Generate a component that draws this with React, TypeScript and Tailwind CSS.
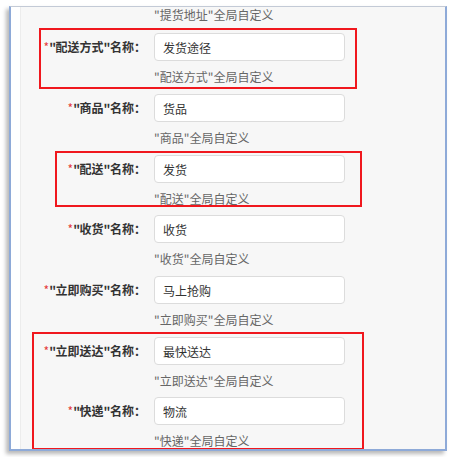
import React from "react";

interface Field {
  key: string;
  value: string;
  gap: string;
}

const fields: Field[] = [
  { key: "配送方式", value: "发货途径", gap: "pb-[9px]" },
  { key: "商品", value: "货品", gap: "pb-[9px]" },
  { key: "配送", value: "发货", gap: "pb-[8px]" },
  { key: "收货", value: "收货", gap: "pb-[9px]" },
  { key: "立即购买", value: "马上抢购", gap: "pb-[9px]" },
  { key: "立即送达", value: "最快送达", gap: "pb-[8px]" },
  { key: "快递", value: "物流", gap: "" },
];

const font = {
  fontFamily: '"Noto Sans CJK SC", "Noto Sans", sans-serif',
};

function Row({ field }: { field: Field }) {
  return (
    <div className={field.gap}>
      <div className="flex items-center">
        <label className="w-[125px] text-right text-[12px] font-bold text-[#333] whitespace-nowrap">
          <span className="text-[#e4393c] font-normal">*</span>
          <span className="tracking-[-0.5px]">"</span>
          {field.key}
          <span className="tracking-[-0.5px]">"</span>名称：
        </label>
        <input
          readOnly
          defaultValue={field.value}
          className="ml-[8px] w-[191px] h-[28px] rounded-[4px] border border-[#dcdcdc] bg-white pl-[8px] text-[12px] text-[#333] outline-none"
          style={font}
        />
      </div>
      <div className="pt-[8px] pl-[133px] h-[24px] leading-[16px] text-[12px] text-[#666] whitespace-nowrap">
        "{field.key}"全局自定义
      </div>
    </div>
  );
}

function Marked({
  children,
  box,
}: {
  children: React.ReactNode;
  box: string;
}) {
  return (
    <div className="relative">
      {children}
      <span className={`pointer-events-none absolute border-2 border-[#f0181e] ${box}`} />
    </div>
  );
}

export default function App() {
  const [f1, f2, f3, f4, f5, f6, f7] = fields;
  return (
    <div className="w-[450px] h-[457px] bg-white pt-[6px]" style={font}>
      <div className="ml-[9px] w-[438px] h-[445px] border-t border-t-[#c3cad6] border-l-2 border-r-2 border-b-2 border-l-[#8eaad8] border-r-[#8eaad8] border-b-[#8eaad8] shadow-[-3px_3px_4px_rgba(0,0,0,0.28)] flex overflow-hidden">
        <div className="w-[9px] bg-white shrink-0" />
        <div className="flex-1 bg-[#f7f7f7] border-l border-[#ececec] overflow-hidden">
          <div className="pl-[133px] h-[16px] leading-[16px] text-[12px] text-[#666] mb-[10px]">
            "提货地址"全局自定义
          </div>

          <Marked box="left-[18px] w-[318px] top-[-5px] bottom-[5px]">
            <Row field={f1} />
          </Marked>
          <Row field={f2} />
          <Marked box="left-[34px] w-[307px] top-[-4px] bottom-[8px]">
            <Row field={f3} />
          </Marked>
          <Row field={f4} />
          <Row field={f5} />
          <Marked box="left-[11px] w-[332px] top-[-5px] bottom-[-1px]">
            <Row field={f6} />
            <Row field={f7} />
          </Marked>
        </div>
      </div>
    </div>
  );
}
